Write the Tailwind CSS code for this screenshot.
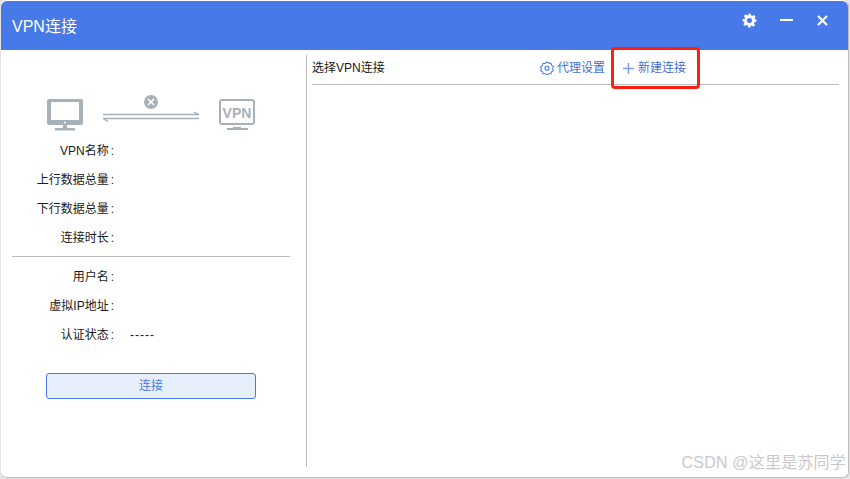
<!DOCTYPE html>
<html lang="en">
<head>
    <meta charset="UTF-8">
    <meta name="viewport" content="width=device-width, initial-scale=1.0">
    <script src="https://cdn.jsdelivr.net/npm/@tailwindcss/browser@4"></script>
    <title>VPN连接</title>
</head>
<body class="w-[850px] h-[479px] overflow-hidden bg-[#e4e4e4] font-['Liberation_Sans','Noto_Sans_CJK_SC',sans-serif]">
    <div class="relative ml-px pt-px w-[848px] h-[478px] flex flex-col bg-white rounded-[6px] border-b border-r border-[#bdbdbd]">
        <!-- title bar -->
        <div class="h-[49px] shrink-0 bg-[#4879e8] rounded-t-[6px] flex items-center pl-[11px] pr-[19px] text-white">
            <span class="text-[16px] mt-[2px]">VPN连接</span>
            <div class="ml-auto flex items-center gap-[23px] mb-[11px]">
                <svg class="w-[15px] h-[15px]" viewBox="0 0 24 24" fill="#fff"><path fill-rule="evenodd" d="M10 1h4l.6 3.100 1.900.8 2.600-1.800 2.800 2.800-1.800 2.600.8 1.900L23 10v4l-3.100.6-.8 1.900 1.800 2.600-2.800 2.800-2.600-1.800-1.900.8L14 23h-4l-.6-3.100-1.900-.8-2.600 1.800-2.800-2.800 1.800-2.600-.8-1.900L1 14v-4l3.100-.6.8-1.900-1.800-2.600 2.800-2.800 2.600 1.800 1.900-.8zM12 8a4 4 0 1 0 0 8 4 4 0 0 0 0-8z"/></svg>
                <div class="w-[13px] h-[2px] bg-white"></div>
                <svg class="w-[13px] h-[13px]" viewBox="0 0 13 13" stroke="#fff" stroke-width="2.200"><path d="M2 2l9 9M11 2l-9 9"/></svg>
            </div>
        </div>

        <div class="flex flex-1 min-h-0">
            <!-- left panel -->
            <div class="w-[305px] shrink-0 pl-[11px] pr-[16px]">
                <div class="h-[49px] mt-[33px] flex items-start">
                    <svg class="w-[36px] h-[32px] ml-[35px] mt-[16px]" viewBox="0 0 36 32" fill="#a8b0b8">
                        <path fill-rule="evenodd" d="M2 0h32a2 2 0 0 1 2 2v22a2 2 0 0 1-2 2H2a2 2 0 0 1-2-2V2a2 2 0 0 1 2-2zm2 3v18h28V3z"/>
                        <circle cx="18" cy="23.500" r="1" fill="#fff"/>
                        <rect x="16" y="26" width="4" height="3"/><rect x="8" y="29" width="20" height="2.500"/>
                    </svg>
                    <svg class="w-[96px] h-[36px] ml-[20px] mt-[12px]" viewBox="0 0 96 36" fill="none" stroke="#a8b0b8">
                        <circle cx="48" cy="7" r="7" fill="#a8b0b8" stroke="none"/>
                        <path d="M45 4l6 6M51 4l-6 6" stroke="#fff" stroke-width="1.600"/>
                        <path d="M0 19.500h96M91 17l5 2.500" stroke-width="1.300"/>
                        <path d="M0 23.500h96M0 23.500l5 3" stroke-width="1.300"/>
                    </svg>
                    <svg class="w-[36px] h-[32px] ml-[20px] mt-[16px]" viewBox="0 0 36 32" fill="none">
                        <rect x="1" y="1" width="34" height="24" rx="2" stroke="#a8b0b8" stroke-width="2"/>
                        <text x="18" y="18.500" text-anchor="middle" font-size="14" font-weight="700" fill="#a8b0b8" font-family="Liberation Sans">VPN</text>
                        <rect x="8" y="29" width="21" height="2" fill="#a8b0b8"/><rect x="14" y="28" width="8" height="3" fill="#a8b0b8"/>
                    </svg>
                </div>

                <dl class="mt-[5px] text-[12px] leading-[29px] text-[#1a1a1a]">
                    <div class="flex"><dt class="w-[102px] text-right after:content-[':'] after:ml-[2px]">VPN名称</dt></div>
                    <div class="flex"><dt class="w-[102px] text-right after:content-[':'] after:ml-[2px]">上行数据总量</dt></div>
                    <div class="flex"><dt class="w-[102px] text-right after:content-[':'] after:ml-[2px]">下行数据总量</dt></div>
                    <div class="flex"><dt class="w-[102px] text-right after:content-[':'] after:ml-[2px]">连接时长</dt></div>
                </dl>
                <div class="mt-[3px] mb-[6px] border-t border-[#bdbdbd] w-[278px]"></div>
                <dl class="text-[12px] leading-[29px] text-[#1a1a1a]">
                    <div class="flex"><dt class="w-[102px] text-right after:content-[':'] after:ml-[2px]">用户名</dt></div>
                    <div class="flex"><dt class="w-[102px] text-right after:content-[':'] after:ml-[2px]">虚拟IP地址</dt></div>
                    <div class="flex"><dt class="w-[102px] text-right after:content-[':'] after:ml-[2px]">认证状态</dt><dd class="ml-[16px] tracking-[1px]">-----</dd></div>
                </dl>

                <button class="mt-[23px] ml-[34px] block w-[210px] h-[26px] rounded-[3px] border border-[#4879e8] bg-[#e8effc] text-[12px] text-[#4879e8]">连接</button>
            </div>

            <!-- divider -->
            <div class="w-px h-[412px] mt-[5px] bg-[#bdbdbd] shrink-0"></div>

            <!-- right panel -->
            <div class="w-[527px] ml-[5px]">
                <div class="h-[35px] border-b border-[#bdbdbd] flex items-center pt-[1px] text-[12px]">
                    <span class="text-[#1a1a1a]">选择VPN连接</span>
                    <div class="ml-auto flex items-center text-[#3f6fdc] mr-[234px]">
                        <svg class="w-[14px] h-[14px] mr-[3px]" viewBox="0 0 24 24" fill="none" stroke="#4879e8" stroke-width="1.800"><path d="M12 1.500l3 2.200 3.700-.1 1.200 3.500 2.900 2.200L21.700 13l1.100 3.300-2.900 2.200-1.200 3.300-3.700-.1-3 2.200-3-2.200-3.700.1-1.200-3.300-2.900-2.200L2.300 13 1.200 9.800l2.900-2.200 1.200-3.500 3.700.1z"/><circle cx="12" cy="12.500" r="3.500"/></svg>
                        <span>代理设置</span>
                    </div>
                    <div class="absolute left-[610px] top-[47px] w-[89px] h-[42px] border-[3px] border-[#fb1f14] rounded-[4px] flex items-center pl-[8px] text-[#3f6fdc]">
                        <svg class="w-[13px] h-[13px] mr-[3px]" viewBox="0 0 13 13" stroke="#7f9fe8" stroke-width="1.500"><path d="M6.500 1v11M1 6.500h11"/></svg>
                        <span>新建连接</span>
                    </div>
                </div>
            </div>
        </div>

        <div class="absolute right-[2px] bottom-[3px] text-[16px] leading-[22px] text-[#c9c9c9] tracking-[0.2px]">CSDN @这里是苏同学</div>
    </div>
</body>
</html>
